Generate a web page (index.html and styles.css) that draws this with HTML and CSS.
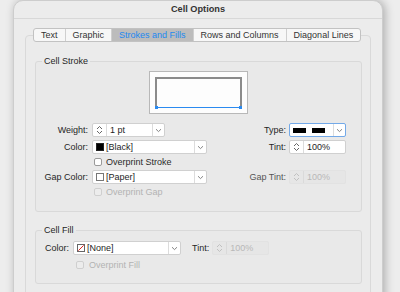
FILE: index.html
```html
<!DOCTYPE html>
<html>
<head>
	<meta charset="utf-8">
	<title>Cell Options</title>
	<link rel="stylesheet" href="styles.css">
</head>
<body>
	<div class="window">
		<div class="titlebar">Cell Options</div>
		<div class="panel">
			<ul class="tabs">
				<li>Text</li>
				<li>Graphic</li>
				<li class="curtab">Strokes and Fills</li>
				<li>Rows and Columns</li>
				<li>Diagonal Lines</li>
			</ul>

			<!-- cell stroke -->
			<fieldset class="group stroke">
				<legend>Cell Stroke</legend>
				<div class="preview">
					<div class="cell"></div>
				</div>
				<div class="rows">
					<label class="lbl">Weight:</label>
					<div class="field weight">
						<span class="spin"><svg width="7" height="10" viewBox="0 0 7 10"><path d="M1 4 L3.5 1.5 L6 4 M1 6 L3.5 8.5 L6 6" fill="none" stroke="#555" stroke-width="0.9"/></svg></span>
						<span class="val">1 pt</span>
						<span class="drop"><svg width="7" height="5" viewBox="0 0 7 5"><path d="M1 1.2 L3.5 3.6 L6 1.2" fill="none" stroke="#777" stroke-width="0.9"/></svg></span>
					</div>
					<label class="lbl right">Type:</label>
					<div class="field type focus">
						<span class="dashes"><i></i><i></i></span>
						<span class="drop"><svg width="7" height="5" viewBox="0 0 7 5"><path d="M1 1.2 L3.5 3.6 L6 1.2" fill="none" stroke="#777" stroke-width="0.9"/></svg></span>
					</div>

					<label class="lbl">Color:</label>
					<div class="field wide">
						<span class="swatch black"></span>
						<span class="val">[Black]</span>
						<span class="drop"><svg width="7" height="5" viewBox="0 0 7 5"><path d="M1 1.2 L3.5 3.6 L6 1.2" fill="none" stroke="#777" stroke-width="0.9"/></svg></span>
					</div>
					<label class="lbl right">Tint:</label>
					<div class="field tint">
						<span class="spin"><svg width="7" height="10" viewBox="0 0 7 10"><path d="M1 4 L3.5 1.5 L6 4 M1 6 L3.5 8.5 L6 6" fill="none" stroke="#555" stroke-width="0.9"/></svg></span>
						<span class="val">100%</span>
					</div>

					<div class="check">
						<span class="box"></span>Overprint Stroke
					</div>

					<label class="lbl">Gap Color:</label>
					<div class="field wide">
						<span class="swatch paper"></span>
						<span class="val">[Paper]</span>
						<span class="drop"><svg width="7" height="5" viewBox="0 0 7 5"><path d="M1 1.2 L3.5 3.6 L6 1.2" fill="none" stroke="#777" stroke-width="0.9"/></svg></span>
					</div>
					<label class="lbl right dim">Gap Tint:</label>
					<div class="field tint disabled">
						<span class="spin"><svg width="7" height="10" viewBox="0 0 7 10"><path d="M1 4 L3.5 1.5 L6 4 M1 6 L3.5 8.5 L6 6" fill="none" stroke="#bbb" stroke-width="0.9"/></svg></span>
						<span class="val">100%</span>
					</div>

					<div class="check off">
						<span class="box"></span>Overprint Gap
					</div>
				</div>
			</fieldset>

			<!-- cell fill -->
			<fieldset class="group fill">
				<legend>Cell Fill</legend>
				<div class="fill-row">
					<label class="lbl">Color:</label>
					<div class="field none">
						<span class="swatch nofill"><svg width="8" height="8" viewBox="0 0 8 8"><path d="M0.5 7.5 L7.5 0.5" stroke="#e0201b" stroke-width="1.3"/></svg></span>
						<span class="val">[None]</span>
						<span class="drop"><svg width="7" height="5" viewBox="0 0 7 5"><path d="M1 1.2 L3.5 3.6 L6 1.2" fill="none" stroke="#777" stroke-width="0.9"/></svg></span>
					</div>
					<label class="lbl tint-lbl">Tint:</label>
					<div class="field tint disabled">
						<span class="spin"><svg width="7" height="10" viewBox="0 0 7 10"><path d="M1 4 L3.5 1.5 L6 4 M1 6 L3.5 8.5 L6 6" fill="none" stroke="#bbb" stroke-width="0.9"/></svg></span>
						<span class="val">100%</span>
					</div>
				</div>
				<div class="check off fill-check">
					<span class="box"></span>Overprint Fill
				</div>
			</fieldset>
		</div>
	</div>
</body>
</html>
```

FILE: styles.css
```css
body{
	margin: 0;
	height: 292px;
	overflow: hidden;
	background: #ededed;
	font-family: "Liberation Sans", Arial, sans-serif;
	font-size: 9px;
	color: #262626;
}
ul{
	list-style: none;
	margin: 0;
	padding: 0;
}
.window{
	width: 370px;
	height: 320px;
	margin-left: 13px;
	box-sizing: border-box;
	background: #ececec;
	border: 1px solid #cdcdcd;
	border-radius: 10px 10px 0 0;
	box-shadow: 2px 0 10px rgba(0,0,0,0.28);
}
.titlebar{
	height: 17px;
	line-height: 16px;
	border-bottom: 1px solid #d8d8d8;
	text-align: center;
	font-weight: bold;
	font-size: 9.2px;
	color: #333;
}
.panel{
	width: 346px;
	height: 300px;
	margin: 16px 0 0 11px;
	box-sizing: border-box;
	padding: 0 8px 0 9px;
	border: 1px solid #d9d9d9;
	border-radius: 4px;
	background: #ebebeb;
}
.tabs{
	display: flex;
	width: max-content;
	margin: -8px 0 0 -2px;
	border: 1px solid #c2c2c2;
	border-radius: 3px;
	background: #f7f7f7;
	overflow: hidden;
}
.tabs li{
	padding: 0 7px;
	line-height: 12px;
	border-left: 1px solid #cfcfcf;
	color: #333;
}
.tabs li:first-child{
	border-left: none;
}
.tabs .curtab{
	background: #bcbcbc;
	color: #1d88f0;
}

.group{
	margin: 14px 0 0;
	padding: 0;
	border: 1px solid #d9d9d9;
	border-radius: 3px;
	background: #e9e9e9;
}
.group legend{
	margin-left: 6px;
	padding: 0 2px;
	line-height: 10px;
	color: #262626;
}
.group.fill{
	margin-top: 13px;
	height: 59px;
	box-sizing: border-box;
}

.preview{
	width: 99px;
	height: 43px;
	box-sizing: border-box;
	margin: 5px auto 0;
	padding: 5px;
	border: 1px solid #b8b8b8;
	background: #fdfdfd;
}
.preview .cell{
	position: relative;
	height: 31px;
	box-sizing: border-box;
	border: 2px solid #8b8b8b;
	border-bottom: 1px solid #2a8af0;
}
.preview .cell::before,
.preview .cell::after{
	content: "";
	position: absolute;
	bottom: -2px;
	width: 3px;
	height: 3px;
	background: #2a8af0;
}
.preview .cell::before{
	left: -2px;
}
.preview .cell::after{
	right: -2px;
}

.rows{
	display: grid;
	grid-template-columns: 56px 115px 82px 57px;
	grid-template-rows: 14px 14px 10px 14px 10px;
	row-gap: 3px;
	margin: 9px 0 0;
	padding-bottom: 14px;
}
.lbl{
	text-align: right;
	padding-right: 4px;
	line-height: 14px;
	white-space: nowrap;
}
.lbl.right{
	padding-right: 3px;
}
.lbl.dim{
	color: #555;
}

.field{
	display: flex;
	align-items: center;
	height: 14px;
	box-sizing: border-box;
	background: #fff;
	border: 1px solid #d0d0d0;
	border-radius: 2px;
	color: #1e1e1e;
}
.field .val{
	flex: 1;
	padding-left: 3px;
	line-height: 12px;
	white-space: nowrap;
}
.field .spin{
	display: flex;
	align-items: center;
	justify-content: center;
	width: 13px;
	height: 100%;
	border-right: 1px solid #dcdcdc;
}
.field .drop{
	display: flex;
	align-items: center;
	justify-content: center;
	width: 11px;
	height: 100%;
	margin-left: auto;
	border-left: 1px solid #dcdcdc;
}
.field.weight{
	width: 73px;
}
.field.wide{
	width: 115px;
}
.field.tint{
	width: 57px;
}
.field.focus{
	width: 57px;
	border-color: #73a9e8;
}
.field.disabled{
	background: #e6e6e6;
	border-color: #e2e2e2;
	color: #b8b8b8;
}
.field.disabled .spin{
	border-right-color: #dadada;
}
.dashes{
	display: flex;
	gap: 6px;
	padding-left: 3px;
}
.dashes i{
	width: 13px;
	height: 5px;
	background: #000;
}
.swatch{
	width: 8px;
	height: 8px;
	margin-left: 3px;
	box-sizing: border-box;
	border: 1px solid #777;
}
.swatch.black{
	background: #000;
	border-color: #222;
}
.swatch.paper{
	background: #fff;
}
.swatch.nofill{
	display: flex;
	background: #fff;
	border: none;
}
.swatch.nofill svg{
	border: 1px solid #666;
	box-sizing: border-box;
}
.swatch + .val{
	padding-left: 2px;
}

.check{
	grid-column: 2 / 5;
	display: flex;
	align-items: center;
	gap: 4px;
	padding-left: 2px;
	line-height: 10px;
	color: #2a2a2a;
}
.check .box{
	width: 8px;
	height: 8px;
	box-sizing: border-box;
	background: #fff;
	border: 1px solid #9a9a9a;
	border-radius: 2px;
}
.check.off{
	color: #b3b3b3;
}
.check.off .box{
	background: #ececec;
	border-color: #cfcfcf;
}

.fill-row{
	display: flex;
	align-items: center;
	margin-top: 6px;
	padding-left: 9px;
}
.fill-row .lbl{
	padding-right: 4px;
}
.field.none{
	width: 108px;
}
.fill-row .tint-lbl{
	margin-left: 11px;
	padding-right: 3px;
}
.fill-check{
	margin: 5px 0 0 38px;
	gap: 5px;
}
```
